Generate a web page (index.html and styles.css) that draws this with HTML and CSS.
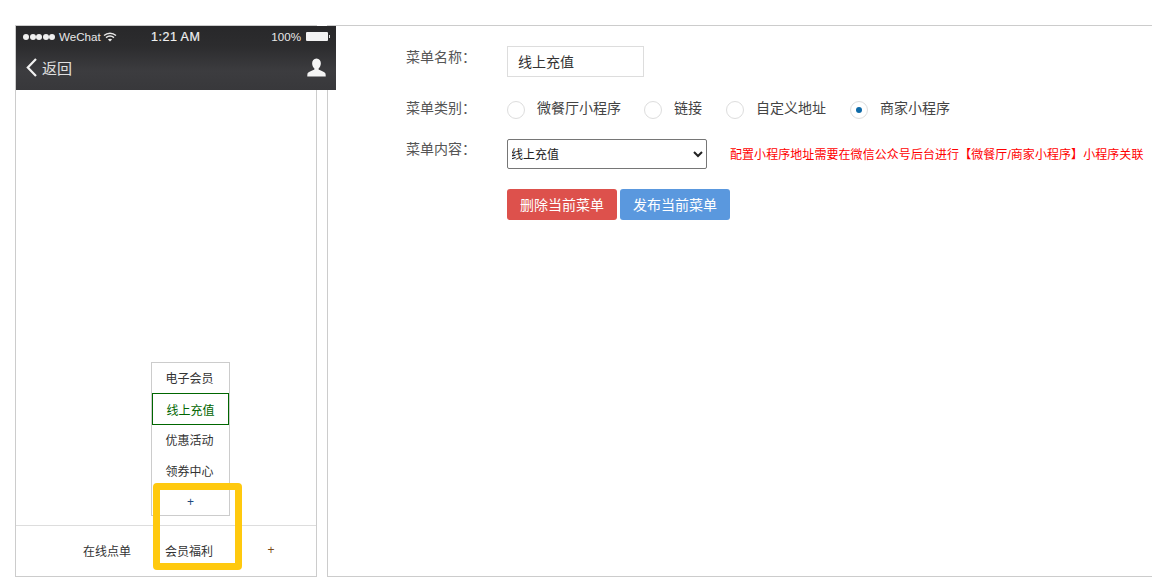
FILE: index.html
```html
<!DOCTYPE html>
<html lang="zh-CN">
<head>
<meta charset="utf-8">
<title>菜单设置</title>
<link rel="stylesheet" href="styles.css">
</head>
<body>
<div class="page">
  <section class="phone">
    <header class="wx-head">
      <div class="status">
        <div class="status-left">
          <span class="dots"><i></i><i></i><i></i><i></i><i></i></span>
          <span>WeChat</span>
          <svg class="wifi" width="14" height="10" viewBox="0 0 14 10"><path d="M1 3.6C4.5.4 9.5.4 13 3.6" fill="none" stroke="#e8e8e8" stroke-width="1.4"/><path d="M3 5.6c2.4-2 5.6-2 8 0" fill="none" stroke="#e8e8e8" stroke-width="1.4"/><path d="M7 9.6 4.9 7.4c1.2-1 3-1 4.2 0z" fill="#e8e8e8"/></svg>
        </div>
        <div class="status-time">1:21 AM</div>
        <div class="status-right">
          <span>100%</span>
          <span class="battery"></span>
        </div>
      </div>
      <div class="nav">
        <div class="back">
          <svg width="12" height="19" viewBox="0 0 12 19"><path d="M10 1 1.800 9.500 10 18" fill="none" stroke="#f2f2f2" stroke-width="2.200"/></svg>
          <span>返回</span>
        </div>
        <svg class="person" width="19" height="19" viewBox="0 0 20 19"><path d="M10 0c3 0 4.600 2.300 4.600 5 0 2.200-1 4.300-2.300 5.300v1.500c2.800 1 6.700 2.300 7.200 4.200.2.900.2 2 .2 3H.3c0-1 0-2.100.2-3 .5-1.900 4.400-3.200 7.200-4.200v-1.500C6.400 9.300 5.400 7.200 5.400 5 5.400 2.300 7 0 10 0z" fill="#f4f4f4"/></svg>
      </div>
    </header>
    <div class="wx-body"></div>
    <nav class="tabs">
      <div class="tab">在线点单</div>
      <div class="tab">会员福利</div>
      <div class="tab tab-add">+</div>
    </nav>
    <ul class="submenu">
      <li>电子会员</li>
      <li class="is-active">线上充值</li>
      <li>优惠活动</li>
      <li>领券中心</li>
      <li class="sub-add">+</li>
    </ul>
    <div class="highlight"></div>
  </section>

  <main class="panel">
    <div class="row row-name">
      <label class="label">菜单名称：</label>
      <input class="text-input" type="text" value="线上充值">
    </div>
    <div class="row row-type">
      <label class="label">菜单类别：</label>
      <div class="radios">
        <span class="radio"></span><span class="radio-text r1">微餐厅小程序</span>
        <span class="radio"></span><span class="radio-text r2">链接</span>
        <span class="radio"></span><span class="radio-text r3">自定义地址</span>
        <span class="radio is-on"></span><span class="radio-text">商家小程序</span>
      </div>
    </div>
    <div class="row row-content">
      <label class="label">菜单内容：</label>
      <select class="select"><option>线上充值</option></select>
      <span class="hint">配置小程序地址需要在微信公众号后台进行【微餐厅/商家小程序】小程序关联</span>
    </div>
    <div class="actions">
      <button class="btn btn-danger" type="button">删除当前菜单</button>
      <button class="btn btn-primary" type="button">发布当前菜单</button>
    </div>
  </main>
</div>
</body>
</html>
```
FILE: styles.css
```css
* { box-sizing: border-box; }
html, body { margin: 0; height: 577px; overflow: hidden; background: #fff; }
body { font-family: "Liberation Sans", "Noto Sans CJK SC", sans-serif; color: #333; font-size: 13px; }

.page { display: flex; height: 577px; padding: 25px 0 0 15px; gap: 10px; }

/* phone preview */
.phone { position: relative; width: 302px; display: flex; flex-direction: column; border: 1px solid #ccc; flex: none; }
.wx-head { width: 320px; height: 64px; flex: none; position: relative; z-index: 1; color: #e8e8e8; background: linear-gradient(#28282a 0, #2c2c2e 20px, #3c3c3f 45px, #38383b 64px); }
.status { height: 21px; display: grid; grid-template-columns: 128px 1fr auto; align-items: center; padding: 0 8px 0 7px; font-size: 11.6px; }
.status-left { display: flex; align-items: center; gap: 3px; }
.dots { display: flex; gap: .5px; margin-right: 1px; }
.dots i { width: 6px; height: 6px; border-radius: 50%; background: #f0f0f0; }
.wifi { margin-left: -1px; }
.status-time { font-size: 12.5px; letter-spacing: .5px; color: #f0f0f0; -webkit-text-stroke: .2px #f0f0f0; }
.status-right { display: flex; align-items: center; gap: 5px; }
.battery { width: 22px; height: 9px; background: #f2f2f2; border-radius: 1px; position: relative; }
.battery::after { content: ""; position: absolute; right: -2px; top: 3px; width: 1px; height: 3px; background: #ddd; }
.nav { height: 43px; display: flex; align-items: center; justify-content: space-between; padding: 0 10px 2px 10px; }
.back { display: flex; align-items: center; gap: 4px; font-size: 15px; color: #e0e0e0; }
.wx-body { flex: 1; }
.tabs { height: 51px; flex: none; border-top: 1px solid #ddd; padding: 0 0 2px 50px; display: grid; grid-template-columns: repeat(3, 82px); font-size: 12px; }
.tab { display: flex; align-items: center; justify-content: center; }
.tab-add { color: #7a4a1a; }

.submenu { position: absolute; left: 135px; top: 336px; width: 79px; height: 154px; margin: 0; padding: 0 2px 0 0; list-style: none; border: 1px solid #ccc; background: #fff; font-size: 12px; }
.submenu li { height: 31px; display: flex; align-items: center; justify-content: center; padding-bottom: 2px; }
.submenu li.is-active { border: 1px solid #060; color: #060; height: 32px; margin: -1px -2px 0 0; padding-bottom: 0; }
.submenu li.sub-add { color: #1e4a80; padding: 0 0 2px 2px; }

.highlight { position: absolute; left: 137px; top: 457px; width: 89px; height: 87px; border: 7px solid #ffc90e; border-radius: 4px; }

/* form panel */
.panel { flex: 1; border: 1px solid #ccc; border-width: 1px 0 1px 1px; padding: 20px 0 0 78px; font-size: 14px; min-width: 0; }
.row { display: grid; grid-template-columns: 101px auto 1fr; align-items: start; }
.row-name { height: 51px; }
.row-type { height: 41px; }
.row-content { height: 51px; }
.label { color: #555; line-height: 22px; }
.text-input { width: 137px; height: 31px; border: 1px solid #ddd; padding: 0 10px 2px; font: 14px "Liberation Sans", "Noto Sans CJK SC", sans-serif; color: #333; outline: none; }
.radios { grid-column: 2 / 4; display: flex; align-items: center; height: 24px; padding-top: 2px; font-size: 14px; color: #444; }
.radio { width: 18px; height: 18px; border: 1px solid #ddd; border-radius: 50%; background: #fff; flex: none; margin-right: 12px; position: relative; }
.radio.is-on::after { content: ""; position: absolute; left: 5px; top: 5px; width: 6px; height: 6px; border-radius: 50%; background: #0e6aa8; }
.radio-text { line-height: 18px; margin: 0 23px 4px 0; }
.radio-text.r2 { margin-right: 24px; }
.radio-text.r3 { margin-right: 24px; }
.select { margin-top: 1px; width: 200px; height: 30px; border: 1px solid #767676; border-radius: 2px; background: #fff; color: #222; padding-top: 2px; text-indent: -1px; font: 12px "Liberation Sans", "Noto Sans CJK SC", sans-serif; }
.hint { color: #f00; font-size: 12px; margin: 1px 0 0 23px; line-height: 32px; white-space: nowrap; letter-spacing: .06px; }
.actions { display: flex; gap: 3px; padding-left: 101px; }
.btn { width: 110px; height: 31px; border: 0; border-radius: 3px; color: #fff; font: 14px "Liberation Sans", "Noto Sans CJK SC", sans-serif; padding: 0 0 2px; }
.btn-danger { background: #dd514c; }
.btn-primary { background: #5a98de; }
```
